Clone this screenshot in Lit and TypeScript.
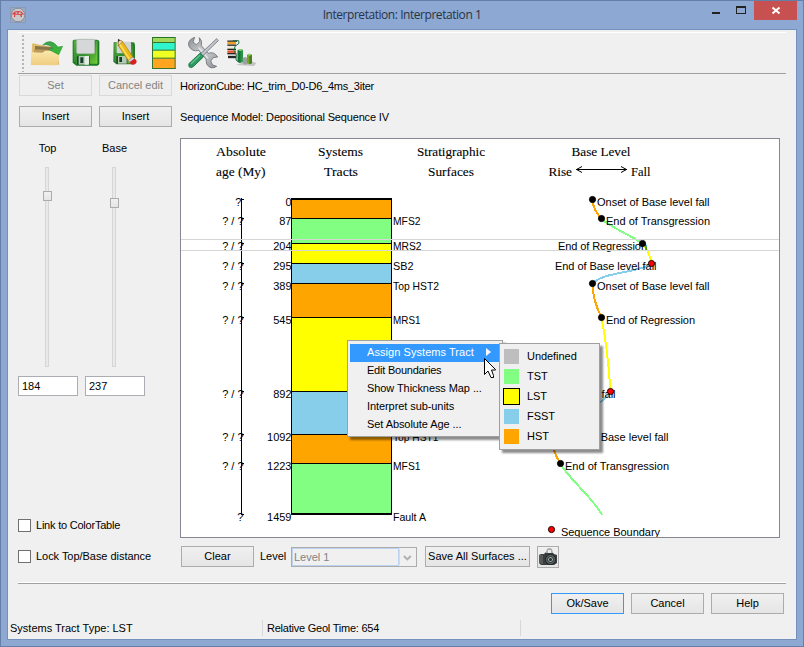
import { LitElement, html, svg, css } from "lit";
import { customElement, property } from "lit/decorators.js";

const ORANGE = "#ffa500";
const GREEN = "#82ff82";
const YELLOW = "#ffff00";
const BLUE = "#87ceeb";

type Tract = { from: number; to: number; color: string };
const TRACTS: Tract[] = [
  { from: 199, to: 218, color: ORANGE },
  { from: 218, to: 243, color: GREEN },
  { from: 243, to: 263, color: YELLOW },
  { from: 263, to: 283, color: BLUE },
  { from: 283, to: 317, color: ORANGE },
  { from: 317, to: 391, color: YELLOW },
  { from: 391, to: 434, color: BLUE },
  { from: 434, to: 463, color: ORANGE },
  { from: 463, to: 514, color: GREEN },
];

type Row = { y: number; age: string; ax: number; time: string; surface: string; sw: number };
const ROWS: Row[] = [
  { y: 198, age: "?", ax: 235.3, time: "0", surface: "", sw: 0 },
  { y: 217, age: "? / ?", ax: 222.3, time: "87", surface: "MFS2", sw: 27.5 },
  { y: 242, age: "? / ?", ax: 222.3, time: "204", surface: "MRS2", sw: 28.5 },
  { y: 262, age: "? / ?", ax: 222.3, time: "295", surface: "SB2", sw: 20.5 },
  { y: 282, age: "? / ?", ax: 222.3, time: "389", surface: "Top HST2", sw: 46 },
  { y: 316, age: "? / ?", ax: 222.3, time: "545", surface: "MRS1", sw: 27.5 },
  { y: 390, age: "? / ?", ax: 222.3, time: "892", surface: "", sw: 0 },
  { y: 433, age: "? / ?", ax: 222.3, time: "1092", surface: "Top HST1", sw: 45.5 },
  { y: 462, age: "? / ?", ax: 222.3, time: "1223", surface: "MFS1", sw: 27.5 },
  { y: 513, age: "?", ax: 237.3, time: "1459", surface: "Fault A", sw: 33 },
];

const CURVES = [
  { d: "M592.5 200 C593 207 597 214 601.5 218.5", c: ORANGE },
  { d: "M601.5 219 C612 228 630 235 642.5 243.5", c: GREEN },
  { d: "M642.5 244 C648 249 650 256 651.5 263.5", c: YELLOW },
  { d: "M651.5 264 C637 273 603 272 592.5 283.5", c: BLUE },
  { d: "M592.5 284 C593 298 597 309 601.5 317.5", c: ORANGE },
  { d: "M601.5 318 C606 340 609 368 610.5 391.5", c: YELLOW },
  { d: "M610.5 392 C598 412 562 410 551.5 434.5", c: BLUE },
  { d: "M551.5 435 C552 447 556 457 560.5 463.5", c: ORANGE },
  { d: "M560.5 464 C570 480 594 499 602 515", c: GREEN },
];

const EVENTS = [
  { x: 592.5, y: 199.5, tx: 597, w: 112.5, t: "Onset of Base level fall" },
  { x: 601.5, y: 218.5, tx: 606, w: 104, t: "End of Transgression" },
  { x: 642.5, y: 243.5, tx: 558, w: 89, t: "End of Regression" },
  { x: 651.5, y: 263.5, tx: 555, w: 101.5, t: "End of Base level fall", red: true },
  { x: 592.5, y: 283.5, tx: 597, w: 112.5, t: "Onset of Base level fall" },
  { x: 601.5, y: 317.5, tx: 606, w: 89, t: "End of Regression" },
  { x: 610.5, y: 391.5, tx: 514, w: 101.5, t: "End of Base level fall", red: true },
  { x: 551.5, y: 434.5, tx: 556, w: 112.5, t: "Onset of Base level fall" },
  { x: 560.5, y: 463.5, tx: 565, w: 104, t: "End of Transgression" },
];

const HEADINGS = [
  { x: 216, y: 156, w: 50, t: "Absolute" },
  { x: 216, y: 176, w: 49.5, t: "age (My)" },
  { x: 318, y: 156, w: 45, t: "Systems" },
  { x: 324, y: 176, w: 34, t: "Tracts" },
  { x: 417, y: 156, w: 68, t: "Stratigraphic" },
  { x: 428, y: 176, w: 46, t: "Surfaces" },
  { x: 571.5, y: 156, w: 59, t: "Base Level" },
  { x: 548.5, y: 176, w: 23.5, t: "Rise" },
  { x: 631, y: 176, w: 19.5, t: "Fall" },
];

@customElement("strat-chart")
class StratChart extends LitElement {
  static styles = css`
    :host { display: block; width: 598px; height: 398px; border: 1px solid #858892; background: #fff; }
    svg { display: block; }
    text { font-family: "Liberation Sans", Arial, sans-serif; font-size: 11px; fill: #000; }
    .heading { font-family: "Liberation Serif", "Times New Roman", serif; font-size: 13px; stroke: #000; stroke-width: 0.1px; }
    .ink { stroke: #000; fill: none; }
    .curve { fill: none; stroke-width: 2px; shape-rendering: crispEdges; }
  `;
  render() {
    return html`<svg width="598" height="398" viewBox="181 139 598 398">
      ${HEADINGS.map((h) => svg`<text class="heading" x=${h.x} y=${h.y} textLength=${h.w} lengthAdjust="spacingAndGlyphs">${h.t}</text>`)}
      <path class="ink" d="M576 169.5H627M582 166.5L576.5 169.5L582 172.5M621 166.5L626.5 169.5L621 172.5" />
      ${TRACTS.map((t) => svg`<rect x="291" y=${t.from} width="101" height=${t.to - t.from} fill=${t.color} />`)}
      <path class="ink" d="M241.5 198V515" />
      ${ROWS.map((r) => svg`
        <path class="ink" d="M241 ${r.y + 1.5}h3M291 ${r.y + 1.5}h101" />
        <text x=${r.ax} y=${r.y + 8} textLength=${r.age === "?" ? 6 : 21.2}>${r.age}</text>
        <text x="291.5" y=${r.y + 8} text-anchor="end">${r.time}</text>
        ${r.surface ? svg`<text x="393" y=${r.y + 8} textLength=${r.sw} lengthAdjust="spacingAndGlyphs">${r.surface}</text>` : ""}`)}
      <path class="ink" d="M291.5 198V514M391.5 198V514" />
      <path stroke="#000" stroke-width="2" d="M291 199H392M291 514H392" />
      ${CURVES.map((c) => svg`<path class="curve" d=${c.d} stroke=${c.c} />`)}
      ${EVENTS.map((e) => svg`
        <text x=${e.tx} y=${e.y + 6.5} textLength=${e.w}>${e.t}</text>
        <circle cx=${e.x} cy=${e.y} r="3.1" fill=${e.red ? "#f00" : "#000"} stroke="#000" stroke-width="0.9" />`)}
      <circle cx="551.5" cy="529.5" r="3.1" fill="#f00" stroke="#000" stroke-width="0.9" />
      <text x="561" y="536" textLength="99">Sequence Boundary</text>
      <path stroke="#d6d6d6" d="M181 239.5H779M181 250.5H779" />
    </svg>`;
  }
}

@customElement("range-slider")
class RangeSlider extends LitElement {
  @property() label = "";
  @property() value = "";
  @property({ type: Number }) offset = 0;
  static styles = css`
    :host { display: flex; flex-direction: column; align-items: flex-start; width: 60px; }
    .label { width: 59px; text-align: center; height: 25px; line-height: 13px; }
    .track { position: relative; margin-left: 27px; width: 2px; height: 198px; border: 1px solid #d6d6d6; background: #e7eaea; }
    .thumb { position: absolute; left: -3px; width: 7px; height: 8px; border: 1px solid #acacac; background: linear-gradient(#f0f0f0, #e5e5e5); }
    .value { box-sizing: border-box; width: 60px; height: 20px; margin-top: 9px; padding-left: 3px; border: 1px solid #abadb3; background: #fff; line-height: 19px; }
  `;
  render() {
    return html`<div class="label">${this.label}</div>
      <div class="track"><div class="thumb" style="top:${this.offset}px"></div></div>
      <div class="value">${this.value}</div>`;
  }
}

const wrench = svg`
  <path d="M584 112 L579 126 L589 134 L599 125 L598 113 Q608 122 604 137 L624 160 Q642 153 653 171 L640 173 L632 183 L638 195 L650 199 Q632 211 620 192 L618 177 L596 151 Q576 157 566 137 Q563 119 584 112Z"
    fill="url(#steel)" stroke="#6d7075" stroke-width="2.5" />
  <path d="M596 143L624 175" stroke="#e7e9eb" stroke-width="4" />
  <path d="M650 116L655 122L639 137L606 170L600 163L634 131Z" fill="#c2c5c9" stroke="#707379" stroke-width="2.5" />
  <path d="M601 159L611 170L583 197Q574 207 567 200Q563 191 574 184Z" fill="#2c9a61" stroke="#166c3f" stroke-width="2.5" />
  <path d="M600 166L573 191" stroke="#68c391" stroke-width="4" />`;

const ICONS = [
  svg`<g>
    <path d="M94 194 L96 134 Q97 130 101 130 L118 134 L170 143 L178 194Z" fill="#e0bd6e" />
    <path d="M105 138 L165 142 L166 165 L104 165Z" fill="#8a7648" />
    <path d="M102 148 L168 151 L168 170 L102 170Z" fill="#ba9c5c" />
    <path d="M92 195 L95 157 L127 158 L136 152 L180 152 L173 193 Q172 196 168 196Z" fill="url(#folder)" />
    <path d="M128 135 Q151 112 174 141 L188 139 L176 164 L145 148 L159 145 Q147 131 128 135Z" fill="url(#greenArrow)" stroke="#2b8b32" stroke-width="1.5" /></g>`,
  svg`<g>
    <path d="M222 119H290Q298 119 298 127V190Q298 197 291 197H229L218 188V124Q218 119 222 119Z" fill="#1c7926" />
    <path d="M221 121H286Q291 121 291 127V191H230L221 184Z" fill="url(#disk)" />
    <rect x="230" y="118" width="54" height="43" rx="4" fill="#d5d7d9" stroke="#a8b5a9" stroke-width="2" />
    <path d="M291 122V191" stroke="#8fce68" stroke-width="2" />
    <rect x="231" y="168" width="38" height="26" rx="3" fill="#194d29" />
    <rect x="236" y="168" width="29" height="26" fill="#afc9ac" />
    <rect x="241" y="172" width="9" height="17" fill="#183b2f" />
    <rect x="254" y="168" width="13" height="26" fill="#e5ece4" /></g>`,
  svg`<g>
    <path d="M341 127H398Q405 127 405 134V188Q405 193 399 193H349L340 185Z" fill="#29792e" />
    <path d="M343 129H398V190H350L343 184Z" fill="url(#disk)" />
    <rect x="350" y="125" width="43" height="35" rx="3" fill="#d0d3d4" />
    <rect x="349" y="168" width="33" height="23" fill="#214e2a" />
    <rect x="354" y="168" width="26" height="23" fill="#b5cbb1" />
    <rect x="358" y="171" width="8" height="15" fill="#173c2b" />
    <path d="M355 120L368 125L401 175L386 184L355 137Z" fill="#efb915" stroke="#a27817" stroke-width="2" />
    <path d="M358 131L390 180" stroke="#ffe66b" stroke-width="4" />
    <path d="M355 118L368 125L355 137Z" fill="#f7daa1" stroke="#765322" stroke-width="1.5" />
    <path d="M354 117L360 121L355 126Z" fill="#222" />
    <path d="M385 181L399 171L405 178L390 188Z" fill="#d4d6d9" stroke="#777" stroke-width="1.5" />
    <path d="M389 186L403 176Q412 180 409 189Q402 197 392 192Z" fill="#d52025" /></g>`,
  svg`<g>
    <path d="M458 112.5H526" stroke="#257323" stroke-width="3" />
    <rect x="459" y="114" width="66" height="14" fill="#a0d85b" />
    <rect x="459" y="127" width="66" height="24" fill="#2ff5cf" />
    <rect x="459" y="151" width="66" height="24" fill="#efff24" />
    <rect x="459" y="175" width="66" height="31" fill="#ffa51f" />
    <path d="M457.500 111V207M525.500 111V207M457 205.500H527M459 127.500H525M459 150.500H525M459 174.500H525" fill="none" stroke="#34742b" stroke-width="3" /></g>`,
  svg`<g>${wrench}</g>`,
  svg`<g>
    <path d="M708 195L762 198L769 189L747 181Z" fill="#c2c3c3" />
    <path d="M682 123.500H711" stroke="#29221b" stroke-width="4" />
    <path d="M682 129H708" stroke="#eda126" stroke-width="7" />
    <path d="M682 135.500H708" stroke="#29221b" stroke-width="4" />
    <path d="M682 142H706" stroke="#efe9da" stroke-width="6" />
    <path d="M682 148H708" stroke="#29221b" stroke-width="4" />
    <path d="M682 155H708" stroke="#e94f28" stroke-width="7" />
    <path d="M682 161H709" stroke="#29221b" stroke-width="4" />
    <path d="M684 171H708" stroke="#252525" stroke-width="7" />
    <path d="M698 122H716L717 130L705 139L702 151L709 165L708 180L716 186" fill="none" stroke="#1d7042" stroke-width="3" />
    <path d="M713 150L722 147L729 150V186L720 189L713 185Z" fill="#279145" />
    <path d="M713 150L721 153V189L713 185Z" fill="#15743a" />
    <path d="M728 174L735 171L742 174V191L735 194L728 190Z" fill="#9ba19c" />
    <path d="M741 164L748 161L756 164V190L749 193L741 190Z" fill="#75a629" />
    <path d="M748 167L756 164V190L748 193Z" fill="#497e25" />
    <path d="M713 150L722 147L729 150L721 153ZM741 164L748 161L756 164L748 167Z" fill="#8bd56c" /></g>`,
];

const DEFS = svg`<defs>
  <linearGradient id="folder" x2="0" y2="1"><stop offset="0" stop-color="#fae8ab" /><stop offset="1" stop-color="#efcc80" /></linearGradient>
  <linearGradient id="greenArrow" x2="1" y2="1"><stop offset="0" stop-color="#3c9e59" /><stop offset="1" stop-color="#39be2c" /></linearGradient>
  <linearGradient id="disk" x2="1" y2="1"><stop offset="0" stop-color="#59b43b" /><stop offset="0.5" stop-color="#2f8c2f" /><stop offset="1" stop-color="#71cb35" /></linearGradient>
  <linearGradient id="steel" x2="1" y2="1"><stop offset="0" stop-color="#8d9094" /><stop offset="0.5" stop-color="#d0d2d5" /><stop offset="1" stop-color="#8a8d92" /></linearGradient>
</defs>`;

@customElement("app-root")
class AppRoot extends LitElement {
  static styles = css`
    :host {
      display: flex; flex-direction: column; box-sizing: border-box; position: relative;
      width: 804px; height: 647px; overflow: hidden; border: 1px solid #657fa9; background: #8ca8d3;
      font: 11px/13px "Liberation Sans", Arial, sans-serif; color: #000; white-space: nowrap;
    }
    svg { display: block; }
    .titlebar { display: grid; grid-template-columns: 120px 1fr 120px; height: 28px; }
    .app-icon { margin: 6px 0 0 9px; }
    .title { font: 12px/17px "Open Sans", "Noto Sans", sans-serif; color: #2b3342; text-align: center; padding-top: 5px; letter-spacing: -0.45px; }
    .controls { display: flex; margin-left: 29px; }
    .client { display: flex; flex-direction: column; width: 788px; height: 609px; margin-left: 6px; border: 1px solid #7490bd; background: #f0f0f0; }
    .toolbar { display: flex; box-sizing: border-box; height: 42px; margin: 2px 10px 0 10px; border-top: 1px solid #fff; border-bottom: 1px solid #a0a0a0; padding: 1px 0 0 4px; }
    .grip { width: 2px; height: 37px; margin: 1px 3px 0 0; background: repeating-linear-gradient(#b6b6b6 0 2px, #f0f0f0 2px 4px); }
    .body { display: flex; height: 493px; }
    .side { width: 162px; padding-left: 10px; display: flex; flex-direction: column; }
    .main { display: flex; flex-direction: column; width: 600px; }
    .pair { display: flex; gap: 7px; margin: 1px 0 0 1px; }
    .pair.second { margin-top: 10px; }
    .btn {
      box-sizing: border-box; width: 73px; height: 21px; border: 1px solid #acacac; flex: none;
      background: linear-gradient(#f0f0f0, #e5e5e5); text-align: center; line-height: 19px;
    }
    .btn.off { color: #838383; border-color: #d9d9d9; background: #efefef; }
    .btn.primary { border-color: #3399ff; }
    .btn.wide { width: 105px; margin-left: 8px; letter-spacing: 0.02px; }
    .btn.icon { width: 22px; height: 22px; margin-left: 7px; }
    .sliders { display: flex; gap: 7px; margin-top: 15px; }
    .check { display: flex; align-items: center; gap: 5px; height: 13px; }
    .box { box-sizing: border-box; width: 13px; height: 13px; border: 1px solid #707070; background: #fff; }
    .check.first { margin-top: 123px; letter-spacing: -0.22px; }
    .check.last { margin-top: 18px; letter-spacing: -0.04px; }
    .info { height: 13px; margin-top: 6px; letter-spacing: -0.25px; }
    .info.model { margin-top: 18px; letter-spacing: -0.16px; }
    strat-chart { margin-top: 14px; }
    .under { display: flex; margin: 8px 0 0 1px; }
    .level { margin: 4px 4px 0 6px; width: 27px; }
    .combo { display: flex; box-sizing: border-box; width: 126px; height: 20px; margin-top: 1px; border: 1px solid #acacac; }
    .combo-text { width: 106px; border: 1px solid #bcd4ef; line-height: 17px; padding-left: 1px; color: #838383; }
    .footer { height: 50px; margin: 16px 10px 0 10px; border-top: 1px solid #a0a0a0; box-shadow: 0 -1px #fff; }
    .actions { display: flex; justify-content: flex-end; gap: 7px; margin: 9px 2px 0 0; }
    .status { display: flex; margin: auto 0 3px 0; height: 16px; line-height: 17px; }
    .cell { box-sizing: border-box; padding-left: 2px; border-right: 1px solid #d7d7d7; }
    .cell.type { width: 255px; }
    .cell.time { width: 258px; padding-left: 4px; letter-spacing: -0.23px; }
    .menu { position: absolute; box-sizing: border-box; border: 1px solid #a0a0a0; background: #f0f0f0; box-shadow: 3px 3px 2px rgba(0, 0, 0, 0.45); }
    .context { left: 346px; top: 339px; width: 156px; height: 97px; padding: 3px 2px; }
    .item { display: flex; height: 18px; line-height: 16px; padding-left: 17px; letter-spacing: -0.08px; }
    .item.boundaries { letter-spacing: -0.22px; }
    .item.active { background: #3399ff; color: #fff; letter-spacing: 0.06px; }
    .arrow { width: 0; height: 0; margin: 4px 0 0 12px; border: 4px solid transparent; border-left: 5px solid #fff; border-right: 0; }
    .tracts { left: 498px; top: 342px; width: 101px; height: 107px; padding: 2px; }
    .tract { display: flex; gap: 7px; height: 20px; line-height: 20px; align-items: center; letter-spacing: -0.05px; }
    .swatch { box-sizing: border-box; width: 17px; height: 17px; border: 1px solid #f0f0f0; margin-left: 1px; }
    .swatch.on { border-color: #000; }
    .cursor { position: absolute; left: 482px; top: 356px; }
  `;

  render() {
    const tracts = [
      ["Undefined", "#bebebe"], ["TST", GREEN], ["LST", YELLOW], ["FSST", BLUE], ["HST", ORANGE],
    ];
    return html`
      <div class="titlebar">
        <svg class="app-icon" width="16" height="16" viewBox="0 0 16 16">
          <rect x=".5" y=".5" width="15" height="15" fill="#9ca9bf" stroke="#899bb9" />
          <circle cx="8" cy="8" r="6.800" fill="#c9c9cb" stroke="#8a8d94" />
          <path d="M2.500 7.500L5 5L8 4.500L11 5L13.500 7.500M4 7L12 7.500M5 6L4.500 10M8 5V7.500M10.500 7L11.500 10" stroke="#db3b3e" stroke-width="1.200" fill="none" />
        </svg>
        <div class="title">Interpretation: Interpretation 1</div>
        <div class="controls">
          <svg width="91" height="28" viewBox="712 1 91 28">
            <rect x="712" y="12" width="8" height="2" fill="#222" />
            <path d="M736 6h10v8h-10zM737 8v5h8V8z" fill="#222" fill-rule="evenodd" />
            <rect x="754" y="1" width="43" height="19" fill="#c75050" />
            <path d="M772.500 7.500L779.500 13.500M779.500 7.500L772.500 13.500" stroke="#fff" stroke-width="2" />
          </svg>
        </div>
      </div>
      <div class="client">
        <div class="toolbar">
          <div class="grip"></div>
          ${ICONS.map((icon, i) => html`<svg width="39" height="39" viewBox="${81 + 117 * i} 102 117 117">${DEFS}${icon}</svg>`)}
        </div>
        <div class="body">
          <div class="side">
            <div class="pair"><div class="btn off">Set</div><div class="btn off">Cancel edit</div></div>
            <div class="pair second"><div class="btn">Insert</div><div class="btn">Insert</div></div>
            <div class="sliders">
              <range-slider label="Top" value="184" offset="23"></range-slider>
              <range-slider label="Base" value="237" offset="30"></range-slider>
            </div>
            <div class="check first"><div class="box"></div><span>Link to ColorTable</span></div>
            <div class="check last"><div class="box"></div><span>Lock Top/Base distance</span></div>
          </div>
          <div class="main">
            <div class="info">HorizonCube: HC_trim_D0-D6_4ms_3iter</div>
            <div class="info model">Sequence Model: Depositional Sequence IV</div>
            <strat-chart></strat-chart>
            <div class="under">
              <div class="btn">Clear</div>
              <div class="level">Level</div>
              <div class="combo">
                <div class="combo-text">Level 1</div>
                <svg width="17" height="18" viewBox="0 0 17 18"><path d="M.5 1V17" stroke="#d9d9d9" /><path d="M5 8L8.500 11.500L12 8" fill="none" stroke="#b0b0b0" stroke-width="2" /></svg>
              </div>
              <div class="btn wide">Save All Surfaces ...</div>
              <div class="btn icon">
                <svg width="20" height="20" viewBox="0 0 20 20">
                  <path d="M1 8L3 7H6L8 5H14L16 7L19 8V16L16 18H3L1 16Z" fill="#3a3d3d" />
                  <path d="M2 8V16M4 8V17" stroke="#727676" stroke-width="1" />
                  <path d="M8 5L9 2Q11.500 0 14 2L15 6H8Z" fill="#a8acac" />
                  <path d="M10 3H13V6H10Z" fill="#e8e9e9" />
                  <circle cx="12.500" cy="12.500" r="5" fill="#626969" stroke="#1d2020" />
                  <circle cx="12.500" cy="12.500" r="3" fill="#a0aaaa" stroke="#252a2a" />
                  <circle cx="12.500" cy="12.500" r="1.500" fill="#252b2c" />
                </svg>
              </div>
            </div>
          </div>
        </div>
        <div class="footer">
          <div class="actions"><div class="btn primary">Ok/Save</div><div class="btn">Cancel</div><div class="btn">Help</div></div>
        </div>
        <div class="status">
          <div class="cell type">Systems Tract Type: LST</div>
          <div class="cell time">Relative Geol Time: 654</div>
        </div>
      </div>
      <div class="menu context">
        <div class="item active">Assign Systems Tract<div class="arrow"></div></div>
        <div class="item boundaries">Edit Boundaries</div>
        <div class="item">Show Thickness Map ...</div>
        <div class="item">Interpret sub-units</div>
        <div class="item">Set Absolute Age ...</div>
      </div>
      <div class="menu tracts">
        ${tracts.map(([name, color]) => html`<div class="tract">
          <div class="swatch ${name === "LST" ? "on" : ""}" style="background:${color}"></div><span>${name}</span>
        </div>`)}
      </div>
      <svg class="cursor" width="14" height="23" viewBox="0 0 14 23">
        <path d="M1.500 1.500V17.500L5 14L8 20.500H10.500V18.500L8.500 13H12.500V12.500Z" fill="#fff" stroke="#000" />
      </svg>`;
  }
}
